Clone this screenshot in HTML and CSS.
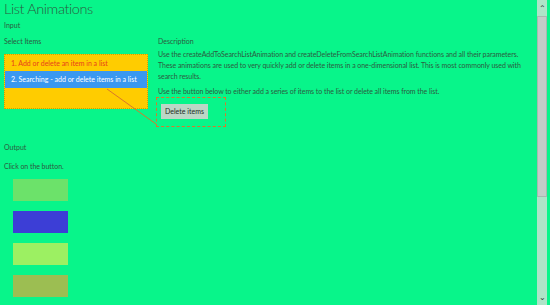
FILE: index.html
```html
<!DOCTYPE html>
<html lang="en">
<head>
    <meta charset="UTF-8">
    <title>List Animations</title>
    <link rel="stylesheet" href="styles.css">
</head>
<body>
    <div class="page">
        <div class="main">
            <h1 class="title">List Animations</h1>
            <div class="section">Input</div>
            <div class="input_row">
                <div class="select_col">
                    <div class="label">Select Items</div>
                    <div class="listbox">
                        <div class="item item_red">1. Add or delete an item in a list</div>
                        <div class="item item_sel">2. Searching - add or delete items in a list</div>
                    </div>
                </div>
                <div class="desc_col">
                    <div class="label">Description</div>
                    <p class="text">Use the createAddToSearchListAnimation and createDeleteFromSearchListAnimation functions and all their parameters. These animations are used to very quickly add or delete items in a one-dimensional list. This is most commonly used with search results.</p>
                    <p class="text">Use the button below to either add a series of items to the list or delete all items from the list.</p>
                    <div class="focus_box">
                        <button class="btn">Delete items</button>
                    </div>
                </div>
            </div>
            <div class="section output_label">Output</div>
            <div class="text output_hint">Click on the button.</div>
            <div class="tiles">
                <div class="tile tile1"></div>
                <div class="tile tile2"></div>
                <div class="tile tile3"></div>
                <div class="tile tile4"></div>
            </div>
            <!-- connector line from selected item to the button -->
            <svg class="connector" width="550" height="305" viewBox="0 0 550 305">
                <line x1="107" y1="89" x2="156" y2="124" stroke="#d8782a" stroke-width="1"/>
            </svg>
        </div>
        <div class="scrollbar">
            <div class="arrow">&#8963;</div>
            <div class="thumb"></div>
            <div class="track"></div>
            <div class="arrow">&#8964;</div>
        </div>
    </div>
</body>
</html>
```

FILE: styles.css
```css
html, body {
    margin: 0;
    padding: 0;
}
body {
    width: 550px;
    height: 305px;
    overflow: hidden;
    background-color: #08f58a;
    color: #2c5a40;
    font-family: Lato, "Open Sans", sans-serif;
}
.page {
    display: flex;
    height: 305px;
}
.main {
    flex: 1;
    padding: 0 0 0 4px;
    position: relative;
}
.title {
    margin: 0;
    font-size: 14.5px;
    font-weight: 300;
    letter-spacing: -0.4px;
    line-height: 18px;
    color: #2c5a40;
}
.section {
    font-size: 7px;
    line-height: 10px;
    margin-top: 2px;
}
.label {
    font-size: 7px;
    line-height: 10px;
}
.input_row {
    display: flex;
    margin-top: 6px;
}
.select_col {
    width: 144px;
}
.listbox {
    margin-top: 8px;
    height: 55px;
    background-color: #ffcc00;
    border: 1px dotted #d0a000;
    box-sizing: border-box;
    padding-top: 0;
}
.item {
    font-size: 7px;
    height: 16px;
    line-height: 16px;
    padding-left: 6px;
}
.item_red {
    color: #e8401c;
}
.item_sel {
    background-color: #3a98f0;
    color: #ffffff;
    height: 17px;
    line-height: 17px;
}
.desc_col {
    margin-left: 10px;
    width: 372px;
}
.text {
    font-size: 7px;
    line-height: 11px;
    letter-spacing: -0.05px;
    margin: 3px 0 0 0;
}
.desc_col .text + .text {
    margin-top: 4px;
}
.focus_box {
    display: flex;
    align-items: flex-start;
    margin-top: 0;
    margin-left: -2px;
    width: 70px;
    height: 30px;
    border: 1px dashed #d8782a;
    box-sizing: border-box;
    padding: 6px 0 0 4px;
}
.btn {
    font-family: Lato, "Open Sans", sans-serif;
    font-size: 7px;
    line-height: 15px;
    height: 15px;
    padding: 0 4px;
    border: none;
    background-color: #bcd6c6;
    color: #1c2a22;
}
.output_label {
    margin-top: 15px;
}
.text.output_hint {
    margin-top: 9px;
}
.tiles {
    display: flex;
    flex-direction: column;
    gap: 10px;
    margin: 7px 0 0 9px;
}
.tile {
    width: 55px;
    height: 22px;
}
.tile1 {
    background-color: #6ce26a;
}
.tile2 {
    background-color: #3c3ed6;
}
.tile3 {
    background-color: #9cf062;
}
.tile4 {
    background-color: #9cbe52;
}
.connector {
    position: absolute;
    top: 0;
    left: 0;
    pointer-events: none;
}
.scrollbar {
    width: 10px;
    margin-right: 3px;
    display: flex;
    flex-direction: column;
    background-color: #aee4c8;
}
.arrow {
    height: 16px;
    font-size: 8px;
    line-height: 16px;
    text-align: center;
    color: #2a3a30;
}
.thumb {
    height: 181px;
    background-color: #c4ccc8;
    border: 1px solid #a8b8b0;
    box-sizing: border-box;
}
.track {
    flex: 1;
}
```
